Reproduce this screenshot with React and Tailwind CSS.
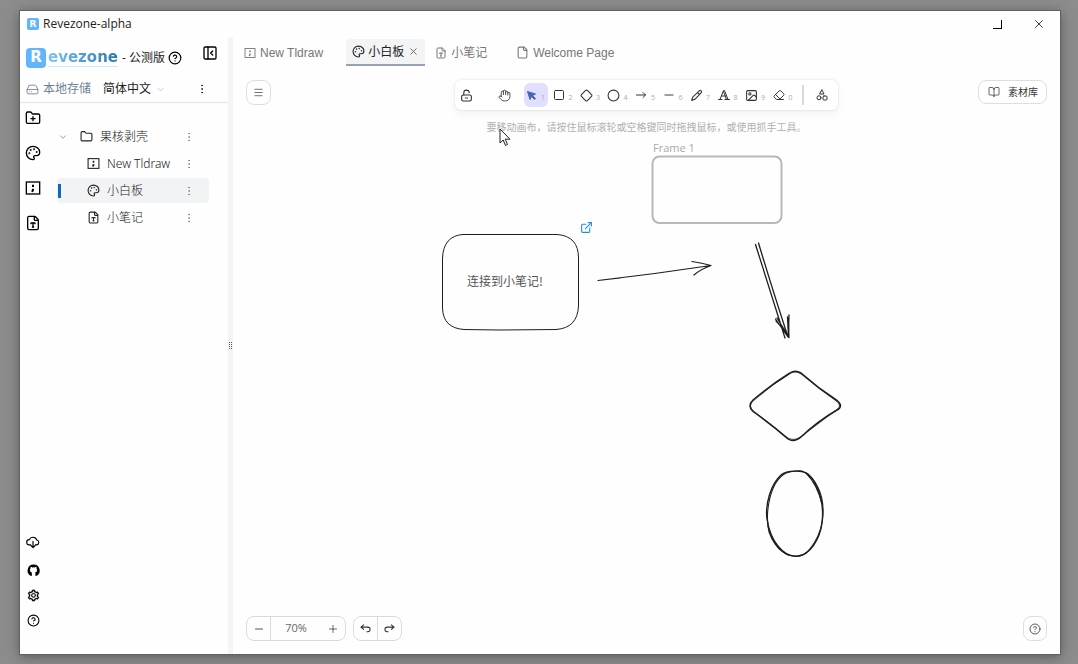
import {
  ChevronDown, FileType, File, Folder, FolderPlus, HardDrive, CircleHelp, Palette, PanelLeftClose,
  EllipsisVertical, X, Menu, Hand, Square, Diamond, Circle, Minus,
  Image, Eraser, BookOpen, Plus, ExternalLink,
} from 'lucide-react';
import { AiOutlineSetting } from 'react-icons/ai';

function StrokeIcon({ size = 12, strokeWidth = 2, children }) {
  return (
    <svg width={size} height={size} viewBox="0 0 24 24" fill="none" stroke="currentColor" strokeWidth={strokeWidth} strokeLinecap="round" strokeLinejoin="round" aria-hidden="true">
      {children}
    </svg>
  );
}

function TldrawIcon({ size = 14, strokeWidth = 2 }) {
  return (
    <svg width={size} height={size} viewBox="0 0 24 24" fill="none" stroke="currentColor" strokeWidth={strokeWidth} aria-hidden="true">
      <rect x="2" y="3" width="20" height="18" />
      <path d="M12 7v3.400M12 13v2.200l-1.600 2.400" strokeWidth={strokeWidth + 1} />
    </svg>
  );
}

function CursorIcon() {
  return (
    <svg width="11" height="11" viewBox="0 0 22 22" fill="#4a63b8" stroke="#4a63b8" strokeWidth="2" strokeLinejoin="round" aria-hidden="true">
      <path d="M3 3l5 16 3.200-6.200L17 19l2-2-6.200-5.800L19 8z" />
    </svg>
  );
}

const LockIcon = () => (
  <StrokeIcon size={13}>
    <rect x="3" y="11" width="18" height="11" rx="3" />
    <path d="M7 11V7a5 5 0 0 1 10 0M10 16.500h4" />
  </StrokeIcon>
);

const ArrowIcon = () => (
  <StrokeIcon size={12}><path d="M3 12h18M16 7l5 5-5 5" /></StrokeIcon>
);

const PenIcon = () => (
  <StrokeIcon size={13}><path d="M3 21l2-6L17 3.500a2.400 2.400 0 0 1 3.500 3.500L9 19zM14 6.500l3.500 3.500" /></StrokeIcon>
);

const TextIcon = () => (
  <StrokeIcon size={12}><path d="M1 21h7M14 21h9M4 21L11 3h2l7 18M17 21L11 5M7 14h8" /></StrokeIcon>
);

const ShapesIcon = () => (
  <StrokeIcon size={12}>
    <path d="M12 2l4 8H8z" />
    <circle cx="6" cy="17.500" r="4" />
    <rect x="14" y="14" width="8" height="8" rx="2" />
  </StrokeIcon>
);

const UndoIcon = () => (
  <StrokeIcon size={11} strokeWidth={2.2}><path d="M8 14L2 9l6-5M2 9h15a5 5 0 0 1 0 10h-2" /></StrokeIcon>
);

const RedoIcon = () => (
  <StrokeIcon size={11} strokeWidth={2.2}><path d="M16 14l6-5-6-5M22 9H7a5 5 0 0 0 0 10h2" /></StrokeIcon>
);

const CloudIcon = () => (
  <StrokeIcon size={14}>
    <path d="M8 17H6a4.500 4.500 0 0 1-.5-9A7 7 0 0 1 18.500 8.500 4.300 4.300 0 0 1 18 17h-2M12 11v10M8.500 18l3.500 3.500 3.500-3.500" />
  </StrokeIcon>
);

function GithubIcon() {
  return (
    <svg width="13" height="13" viewBox="0 0 24 24" fill="currentColor" aria-hidden="true">
      <path d="M12 1a11 11 0 0 0-4 21.200c.7.100 1-.3 1-.8V18c-.5-.6-.3-1.600.2-2.200C6.800 15.400 5.500 14 5.500 11c0-1.300.4-2.300 1.100-3-.2-.9-.1-2 .2-2.800 1 0 2 .5 2.900 1.100a11 11 0 0 1 4.600 0c.9-.6 1.900-1.100 2.900-1.100.3.800.4 1.900.2 2.800.7.700 1.100 1.700 1.100 3 0 3-1.300 4.400-3.700 4.800.5.600.7 1.300.7 2.400v3.200c0 .5.300.9 1 .8A11 11 0 0 0 12 1z" />
    </svg>
  );
}

function Logo({ className }) {
  return (
    <span className={`flex shrink-0 items-center justify-center bg-[#62b5fa] font-['DejaVu_Sans',sans-serif] leading-none font-bold text-white ${className}`}>R</span>
  );
}

function TitleBar() {
  return (
    <header className="flex h-[26px] items-center pl-[7px] pr-[13px]">
      <Logo className="h-3 w-3 rounded-xs text-[9px]" />
      <h1 className="ml-1 text-xs text-[#222]">Revezone-alpha</h1>
      <div className="ml-auto flex items-center gap-[26px] text-black">
        <button aria-label="Maximize" className="flex h-4 w-4 items-center justify-center">
          <span className="h-[9px] w-[9px] border-r border-b border-black" />
        </button>
        <button aria-label="Close" className="flex h-4 w-4 items-center justify-center"><X size={14} strokeWidth={1.3} /></button>
      </div>
    </header>
  );
}

function SidebarHeader() {
  return (
    <div className="border-b border-[#e4e5e7]">
      <div className="flex h-[41px] items-center pr-[10px] pl-[6px]">
        <Logo className="h-5 w-5 rounded-sm text-[15px]" />
        <span className="ml-[2px] border-b border-[#cfe9fb] bg-linear-to-r from-[#7cc4f3] to-[#2b78ad] bg-clip-text font-['DejaVu_Sans',sans-serif] text-[15px] leading-[18px] font-bold text-transparent">evezone</span>
        <span className="ml-1 text-xs whitespace-nowrap text-[#222]">- 公测版</span>
        <button aria-label="About" className="ml-[3px]"><CircleHelp size={14} /></button>
        <button aria-label="Collapse sidebar" className="mb-[10px] ml-auto"><PanelLeftClose size={16} /></button>
      </div>
      <div className="flex h-6 items-center pr-5 pb-[2px] pl-[6px] text-xs">
        <button className="flex items-center gap-1 text-[#708096]"><HardDrive size={13} strokeWidth={1.6} />本地存储</button>
        <button className="ml-3 flex items-center gap-1 text-[#222]">简体中文<ChevronDown size={11} strokeWidth={1.3} className="text-[#a5a5a5]" /></button>
        <button aria-label="More" className="ml-auto"><EllipsisVertical size={12} strokeWidth={1.4} /></button>
      </div>
    </div>
  );
}

function TreeRow({ icon, label, child, selected }) {
  return (
    <li className={`flex h-[25px] items-center rounded-sm pr-[14px] ${selected ? 'bg-[#f1f3f5]' : ''}`}>
      <span className={`ml-px h-[14px] w-[3px] ${selected ? 'bg-[#1268b8]' : ''}`} />
      {!child && <button aria-label="Toggle folder" className="-ml-[3px] w-[22px]"><ChevronDown size={10} strokeWidth={1.5} className="text-[#666]" /></button>}
      <a href="#" className={`flex items-center gap-[7px] whitespace-nowrap ${child ? 'ml-[26px]' : ''}`}>{icon}{label}</a>
      <button aria-label={`${label} menu`} className="ml-auto"><EllipsisVertical size={12} strokeWidth={1} className="text-[#555]" /></button>
    </li>
  );
}

function Sidebar() {
  return (
    <aside className="flex w-[208px] shrink-0 flex-col">
      <SidebarHeader />
      <div className="flex flex-1">
        <nav aria-label="Actions" className="flex w-[26px] shrink-0 flex-col items-center pt-[7px] pb-[27px]">
          <div className="flex flex-col gap-[19px]">
            <button aria-label="New folder"><FolderPlus size={16} strokeLinejoin="miter" /></button>
            <button aria-label="New board"><Palette size={16} /></button>
            <button aria-label="New Tldraw"><TldrawIcon size={16} /></button>
            <button aria-label="New note"><FileType size={16} /></button>
          </div>
          <div className="mt-auto flex flex-col items-center gap-3">
            <button aria-label="Download" className="mb-[3px]"><CloudIcon /></button>
            <button aria-label="GitHub"><GithubIcon /></button>
            <button aria-label="Settings"><AiOutlineSetting size={13} strokeWidth={30} /></button>
            <button aria-label="Help"><CircleHelp size={13} /></button>
          </div>
        </nav>
        <ul className="mr-[19px] ml-[11px] flex flex-1 flex-col gap-[2px] pt-[21px] font-['Noto_Sans','Noto_Sans_CJK_SC',sans-serif] text-xs font-light text-[#222]">
          <TreeRow icon={<Folder size={13} strokeLinejoin="miter" />} label="果核剥壳" />
          <TreeRow child icon={<TldrawIcon size={13} />} label="New Tldraw" />
          <TreeRow child selected icon={<Palette size={13} />} label="小白板" />
          <TreeRow child icon={<FileType size={13} />} label="小笔记" />
        </ul>
      </div>
    </aside>
  );
}

function Tabs() {
  return (
    <nav aria-label="Open files" className="flex h-[31px] items-center pl-[11px] font-['Liberation_Sans','Noto_Sans_CJK_SC',sans-serif] text-xs text-[#777]">
      <a href="#" className="flex items-center gap-1"><TldrawIcon size={12} strokeWidth={1.8} />New Tldraw</a>
      <div className="ml-[23px] flex h-[27px] items-center gap-1 rounded-t-sm border-b-2 border-[#989fb8] bg-[#f2f4f6] px-[6px] text-[#222]">
        <a href="#" className="flex items-center gap-[3px]"><Palette size={13} />小白板</a>
        <button aria-label="Close tab"><X size={11} className="text-[#666]" /></button>
      </div>
      <a href="#" className="ml-[10px] flex items-center gap-1"><FileType size={12} />小笔记</a>
      <a href="#" className="ml-[29px] flex items-center gap-1"><File size={13} />Welcome Page</a>
    </nav>
  );
}

const tools = [
  ['Selection', <CursorIcon />],
  ['Rectangle', <Square size={12} />],
  ['Diamond', <Diamond size={13} />],
  ['Ellipse', <Circle size={13} />],
  ['Arrow', <ArrowIcon />],
  ['Line', <Minus size={14} strokeWidth={1.6} />],
  ['Draw', <PenIcon />],
  ['Text', <TextIcon />],
  ['Image', <Image size={13} />],
  ['Eraser', <Eraser size={12} />],
];

function Toolbar() {
  return (
    <div role="toolbar" aria-label="Drawing tools" className="flex h-[30px] items-center rounded-md bg-white pr-1 text-[#333] shadow-[0_0_2px_rgba(0,0,0,0.16),0_4px_10px_rgba(0,0,0,0.05)]">
      <button aria-label="Keep tool active" className="flex w-[22px] justify-center"><LockIcon /></button>
      <button aria-label="Hand" className="mr-2 ml-[15px] flex w-6 justify-center"><Hand size={13} strokeWidth={1.6} /></button>
      <div className="grid w-[275px] grid-cols-10">
        {tools.map(([name, icon], i) => (
          <button key={name} aria-label={name} className={`flex h-6 w-6 items-center justify-between rounded-md pr-[3px] ${i === 0 ? 'bg-[#e0dfff]' : ''}`}>
            <span className="flex w-[14px] justify-center">{icon}</span>
            <span className="pt-1 text-[7px] leading-none text-[#aaa]">{(i + 1) % 10}</span>
          </button>
        ))}
      </div>
      <span className="mr-[6px] ml-[3px] h-5 w-[2px] bg-[#d8d8d8]" />
      <button aria-label="More shapes" className="flex w-6 justify-center"><ShapesIcon /></button>
    </div>
  );
}

function Drawing() {
  return (
    <div className="absolute top-0 left-0">
      <svg width="620" height="500" viewBox="233 68 620 500" fill="none" stroke="#1e1e1e" strokeLinecap="round" strokeLinejoin="round" aria-hidden="true">
        <rect x="652.500" y="156.500" width="129" height="66.500" rx="7" stroke="#b8b8b8" strokeWidth="2" />
        <path d="M462.500 234.500H557Q578.500 236 578.500 258V306Q577.500 328 556 329.500L500 330L464 329.500Q443 328 442.500 308V258Q443.500 236 462.500 234.500Z" strokeWidth="1" />
        <path d="M598 280.500Q655 274 711 265.500M598 280.500L620 278M692 261.500Q702 263 711 265.500Q701 269 694 275" strokeWidth="1.200" />
        <path d="M755.500 244.500L785 338M758.500 243Q772 288 788 337M775.500 319L788 337M776 321Q782 327 788 335M777 318L787 334M789 315Q788.500 326 789 337.500M787.500 317L788.500 337" strokeWidth="1.300" />
        <path d="M790 373Q795 369.500 801 373Q818 388 837 400.500Q844 406 837 410Q818 421 801 437Q794 443 788 439Q772 425 753 411.500Q747 406 753 400Q772 384 790 373Z" strokeWidth="1.500" />
        <path d="M791 373Q796 370.500 801 374L819 388.500L837 401.500Q842 406.500 837 409.500L801 436.500Q794 441.500 788 438L753 410.500Q748 405.500 753 401L773 385Z" strokeWidth="0.800" />
        <path d="M781 475C787 470 803 470 808 474C821 485 824 509 822 523C820 539 810 555 798 556C782 558 770 539 767 519C765 504 771 484 781 475Z" strokeWidth="1.400" />
        <path d="M786 473C790 472 797 470 802 471C815 477 824 493 823 514C822 536 809 554 800 556C788 558 776 551 769 532C765 514 769 482 786 473Z" strokeWidth="1.100" />
        <path d="M806 473Q817 484 822 504M814 482L821 498M768 526Q773 546 788 555" strokeWidth="1.100" />
      </svg>
      <span className="absolute top-[72px] left-[420px] text-[11px] leading-4 whitespace-nowrap text-[#aaa]">Frame 1</span>
      <span className="absolute top-[204px] left-[234px] font-['Noto_Sans_CJK_SC',sans-serif] text-xs leading-[18px] whitespace-nowrap text-[#555]">连接到小笔记!</span>
      <a href="#" aria-label="Open linked note" className="absolute top-[153px] left-[347px] text-[#228be6]"><ExternalLink size={13} /></a>
    </div>
  );
}

function Pointer() {
  return (
    <svg className="absolute top-[60px] left-[266px]" width="12" height="19" viewBox="0 0 12 19" fill="white" stroke="#222" strokeWidth="1" aria-hidden="true">
      <path d="M1 1v14l3.200-3 2.300 5.500 2-1-2.300-5.300H11z" />
    </svg>
  );
}

function Canvas() {
  return (
    <section aria-label="Canvas" className="relative flex flex-1 flex-col justify-between">
      <Drawing />
      <div className="relative grid grid-cols-[1fr_auto_1fr] items-start px-[13px] pt-3">
        <button aria-label="Menu" className="flex h-[25px] w-[25px] items-center justify-center rounded-lg border border-[#dedede] bg-white"><Menu size={11} className="text-[#666]" /></button>
        <div className="flex flex-col items-center">
          <Toolbar />
          <p className="mt-[9px] text-[10px] leading-4 whitespace-nowrap text-[#b0b0b0]">要移动画布，请按住鼠标滚轮或空格键同时拖拽鼠标，或使用抓手工具。</p>
        </div>
        <button className="flex h-6 items-center gap-2 justify-self-end rounded-lg border border-[#dedede] bg-white pr-2 pl-[9px] text-[10px] whitespace-nowrap text-[#333]"><BookOpen size={12} strokeWidth={1.5} />素材库</button>
      </div>
      <footer className="relative flex items-center px-[13px] pb-[13px] text-[#333]">
        <div className="flex h-[25px] items-center rounded-lg border border-[#dadada]">
          <button aria-label="Zoom out" className="flex h-full w-6 items-center justify-center border-r border-[#dadada]"><Minus size={12} strokeWidth={1.7} /></button>
          <button className="w-[50px] text-[11px] text-[#666]">70%</button>
          <button aria-label="Zoom in" className="flex w-6 items-center justify-center"><Plus size={12} strokeWidth={1.5} /></button>
        </div>
        <div className="ml-[7px] flex h-[25px] rounded-lg border border-[#dadada]">
          <button aria-label="Undo" className="flex w-6 items-center justify-center border-r border-[#dadada]"><UndoIcon /></button>
          <button aria-label="Redo" className="flex w-[23px] items-center justify-center"><RedoIcon /></button>
        </div>
        <button aria-label="Help" className="ml-auto flex h-[25px] w-6 items-center justify-center rounded-lg border border-[#dedede]"><CircleHelp size={12} strokeWidth={1.6} /></button>
      </footer>
      <Pointer />
    </section>
  );
}

export default function App() {
  return (
    <div className="flex min-h-screen flex-col bg-[#8c8c8c] pt-[11px] pr-[18px] pb-[10px] pl-5 font-['Open_Sans','Noto_Sans_CJK_SC',sans-serif] text-black">
      <div className="flex flex-1 flex-col bg-[#fefefe] shadow-[0_0_0_1px_#606060,0_2px_12px_rgba(0,0,0,0.4)]">
        <TitleBar />
        <div className="flex flex-1">
          <Sidebar />
          <div role="separator" className="flex w-[5px] shrink-0 items-center justify-center bg-[#f4f5f5]">
            <span className="grid grid-cols-2 gap-px">
              {[0, 1, 2, 3, 4, 5, 6, 7].map((n) => <span key={n} className="h-px w-px bg-[#555]" />)}
            </span>
          </div>
          <main className="flex min-w-0 flex-1 flex-col">
            <Tabs />
            <Canvas />
          </main>
        </div>
      </div>
    </div>
  );
}
